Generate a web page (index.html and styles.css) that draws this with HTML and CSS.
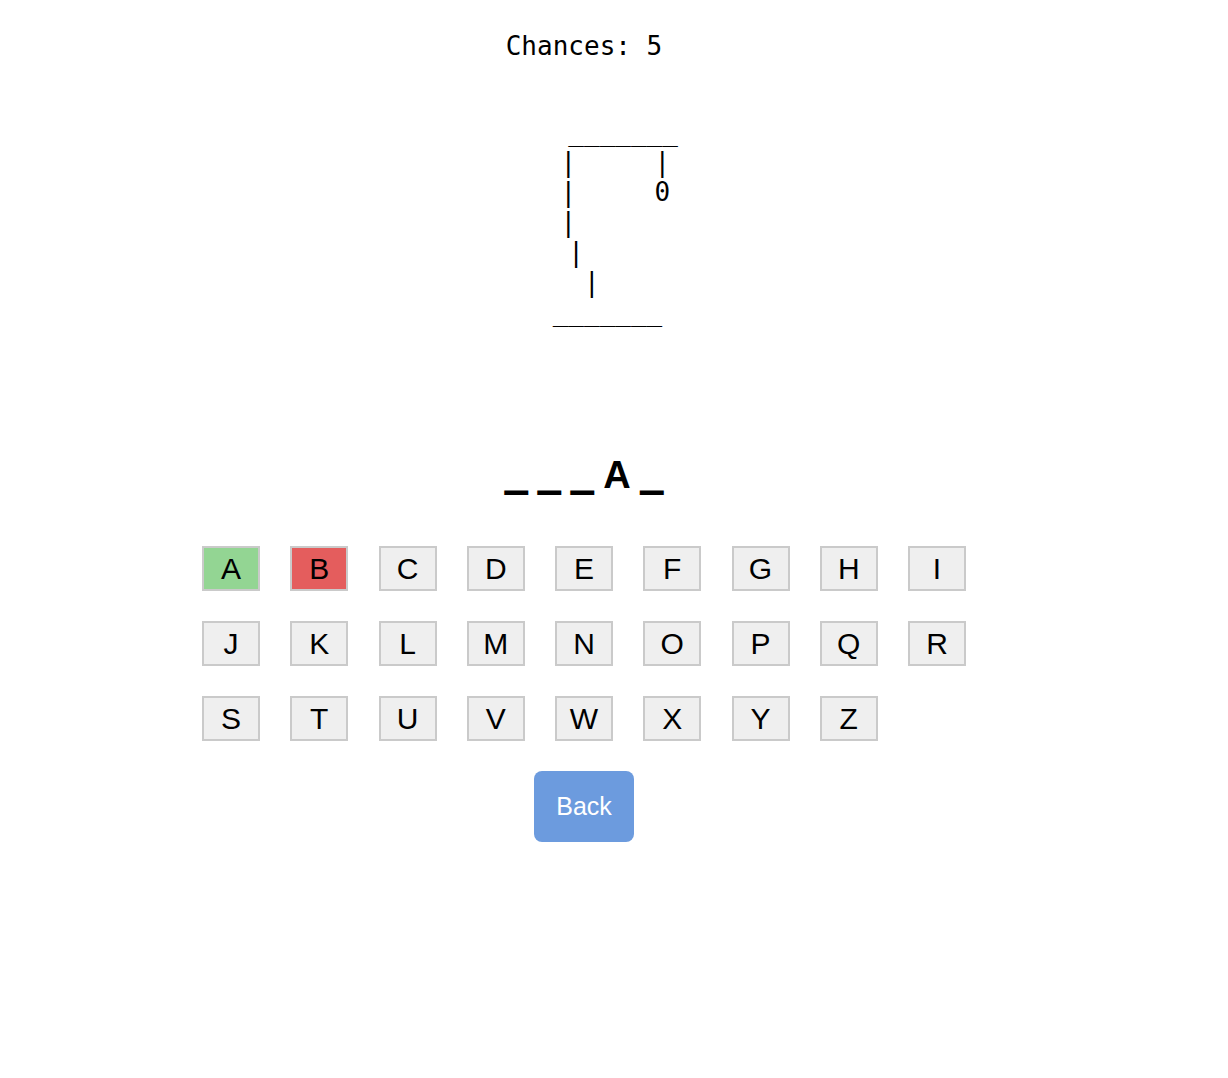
FILE: index.html
```html
<!DOCTYPE html>
<html lang="en">
<head>
<meta charset="utf-8">
<title>Hangman</title>
<link rel="stylesheet" href="styles.css">
</head>
<body>
<main class="game">
  <div class="status">Chances: 5</div>
  <pre class="gallows">     _______
    |     |
    |     0
    |      
    |     
    |   
   _______</pre>
  <div class="word"><span class="blank">_</span><span class="blank">_</span><span class="blank">_</span><span class="letter">A</span><span class="blank">_</span></div>
  <div class="keys">
    <button class="key key-hit">A</button>
    <button class="key key-miss">B</button>
    <button class="key">C</button>
    <button class="key">D</button>
    <button class="key">E</button>
    <button class="key">F</button>
    <button class="key">G</button>
    <button class="key">H</button>
    <button class="key">I</button>
    <button class="key">J</button>
    <button class="key">K</button>
    <button class="key">L</button>
    <button class="key">M</button>
    <button class="key">N</button>
    <button class="key">O</button>
    <button class="key">P</button>
    <button class="key">Q</button>
    <button class="key">R</button>
    <button class="key">S</button>
    <button class="key">T</button>
    <button class="key">U</button>
    <button class="key">V</button>
    <button class="key">W</button>
    <button class="key">X</button>
    <button class="key">Y</button>
    <button class="key">Z</button>
  </div>
  <div class="actions">
    <button class="back">Back</button>
  </div>
</main>
</body>
</html>
```
FILE: styles.css
```css
html, body {
  margin: 0;
  padding: 0;
  background: #ffffff;
}

body {
  font-family: "Liberation Sans", Arial, sans-serif;
  color: #000000;
}

.game {
  width: 1168px;
  text-align: center;
  padding-top: 31px;
}

.status {
  font-family: "DejaVu Sans Mono", "Liberation Mono", monospace;
  font-size: 26px;
  line-height: 30px;
}

.gallows {
  font-family: "DejaVu Sans Mono", "Liberation Mono", monospace;
  font-size: 26px;
  line-height: 30px;
  margin: 55.5px 0 0 0;
  text-align: center;
  white-space: pre;
}

.word {
  margin-top: 126px;
  font-size: 38px;
  font-weight: bold;
  line-height: 44px;
  height: 44px;
  text-align: center;
}

.word span {
  margin: 0 4.5px;
}

.blank {
  font-family: "DejaVu Sans", "Liberation Sans", sans-serif;
  font-size: 48px;
  line-height: 0;
  vertical-align: 4px;
}

.letter {
  font-family: "Liberation Sans", Arial, sans-serif;
}

.keys {
  margin: 49.6px auto 0;
  display: grid;
  grid-template-columns: repeat(9, 58px);
  column-gap: 30.25px;
  row-gap: 30px;
  width: 764px;
}

.key {
  box-sizing: border-box;
  width: 58px;
  height: 45px;
  padding: 0;
  margin: 0;
  border: 2px solid #cacaca;
  background: #efefef;
  color: #000000;
  font-family: "Liberation Sans", Arial, sans-serif;
  font-size: 30px;
  line-height: 34px;
  display: flex;
  align-items: center;
  justify-content: center;
}

.key-hit {
  background: #93d593;
}

.key-miss {
  background: #e45d5d;
}

.actions {
  margin-top: 30px;
  display: flex;
  justify-content: center;
}

.back {
  box-sizing: border-box;
  width: 100px;
  height: 71px;
  border: none;
  border-radius: 8px;
  background: #6c9bde;
  color: #ffffff;
  font-family: "Liberation Sans", Arial, sans-serif;
  font-size: 25px;
  padding: 0;
}
```
